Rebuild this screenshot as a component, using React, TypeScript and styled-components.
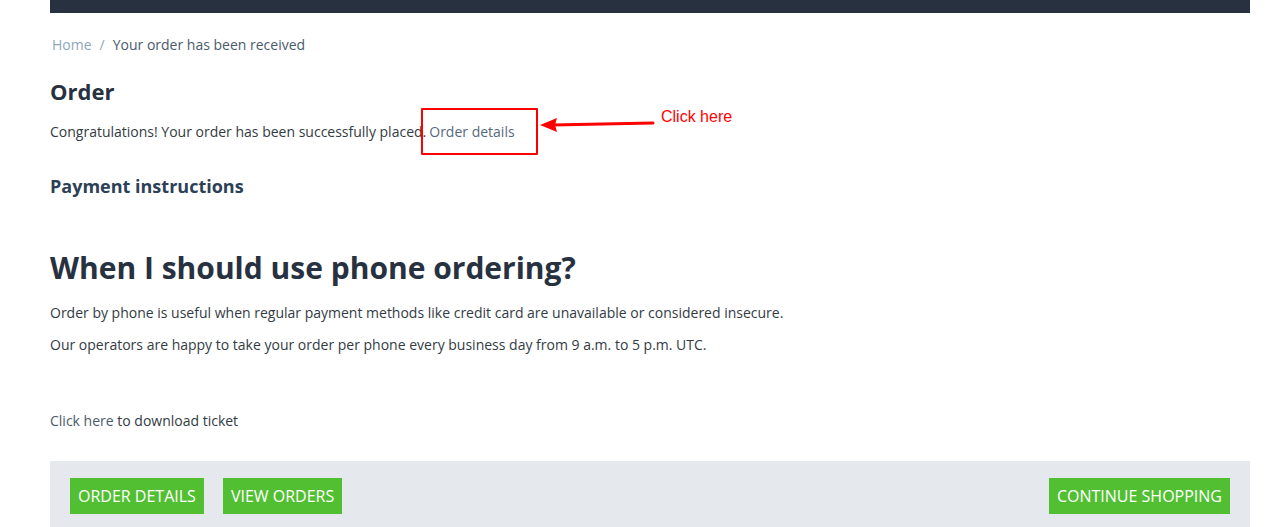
import React from "react";
import styled, { createGlobalStyle } from "styled-components";

const Global = createGlobalStyle`
  html, body { margin: 0; padding: 0; background: #fff; }
  body { font-family: "Open Sans", "Liberation Sans", sans-serif; color: #333; }
  * { box-sizing: border-box; }
`;

const Container = styled.div`
  width: 1200px;
  margin-left: 50px;
  position: relative;
`;

const TopBar = styled.div`
  height: 13px;
  background: #27313f;
`;

const Breadcrumb = styled.nav`
  display: flex;
  gap: 8px;
  align-items: center;
  font-size: 14px;
  padding: 23px 0 0 2px;
  line-height: 18px;
  color: #4a5b6c;
`;

const Crumb = styled.span<{ $muted?: boolean }>`
  color: ${(p) => (p.$muted ? "#8fa6ba" : "#4a5b6c")};
`;

const Title = styled.h1`
  margin: 22px 0 0;
  font-size: 22px;
  font-weight: 700;
  line-height: 30px;
  color: #27313f;
`;

const Text = styled.p<{ $top?: number }>`
  margin: ${(p) => p.$top ?? 0}px 0 0;
  font-size: 14px;
  line-height: 20px;
  color: #333b44;
`;

const AnnotatedLink = styled.a`
  position: relative;
  color: #56697c;
  text-decoration: none;
  margin-left: 3px;
`;

const RedBox = styled.span`
  position: absolute;
  left: -8px;
  top: -14px;
  width: 117px;
  height: 47px;
  border: 2px solid #f00;
  border-radius: 1px;
`;

const Arrow = styled.svg`
  position: absolute;
  left: 488px;
  top: 114px;
`;

const Callout = styled.span`
  position: absolute;
  left: 611px;
  top: 108px;
  font-family: "Liberation Sans", Arial, sans-serif;
  font-size: 16px;
  color: #f00;
`;

const SubTitle = styled.h2`
  margin: 32px 0 0;
  font-size: 18px;
  font-weight: 700;
  line-height: 24px;
  color: #2c4056;
`;

const BigTitle = styled.h2`
  margin: 50px 0 0;
  font-size: 30px;
  font-weight: 700;
  line-height: 40px;
  color: #27313f;
`;

const InlineLink = styled.a`
  color: #4a5b6c;
  text-decoration: none;
`;

const ActionBar = styled.div`
  margin-top: 30px;
  background: #e5e9ed;
  padding: 17px 20px 17px 20px;
  display: flex;
  align-items: center;
  gap: 19px;
`;

const Spacer = styled.div`
  flex: 1;
`;

const Button = styled.button`
  background: #52bf33;
  color: #fff;
  border: none;
  height: 36px;
  padding: 0 8px;
  font-family: "Open Sans", "Liberation Sans", sans-serif;
  font-size: 16px;
  text-transform: uppercase;
  cursor: pointer;
`;

export default function App() {
  return (
    <>
      <Global />
      <Container>
        <TopBar />
        <Breadcrumb>
          <Crumb $muted>Home</Crumb>
          <Crumb $muted>/</Crumb>
          <Crumb>Your order has been received</Crumb>
        </Breadcrumb>
        <Title>Order</Title>
        <Text $top={16}>
          Congratulations! Your order has been successfully placed.
          <AnnotatedLink href="#">
            Order details
            <RedBox />
          </AnnotatedLink>
        </Text>
        <Arrow width="118" height="20" viewBox="0 0 118 20">
          <polygon points="2,11 19,4 17,11 19,18" fill="#f00" />
          <line x1="14" y1="11" x2="115" y2="9" stroke="#f00" strokeWidth="3" strokeLinecap="round" />
        </Arrow>
        <Callout>Click here</Callout>
        <SubTitle>Payment instructions</SubTitle>
        <BigTitle>When I should use phone ordering?</BigTitle>
        <Text $top={15}>
          Order by phone is useful when regular payment methods like credit card are unavailable or considered insecure.
        </Text>
        <Text $top={12}>
          Our operators are happy to take your order per phone every business day from 9 a.m. to 5 p.m. UTC.
        </Text>
        <Text $top={56}>
          <InlineLink href="#">Click here</InlineLink> to download ticket
        </Text>
        <ActionBar>
          <Button>Order details</Button>
          <Button>View orders</Button>
          <Spacer />
          <Button>Continue shopping</Button>
        </ActionBar>
      </Container>
    </>
  );
}
